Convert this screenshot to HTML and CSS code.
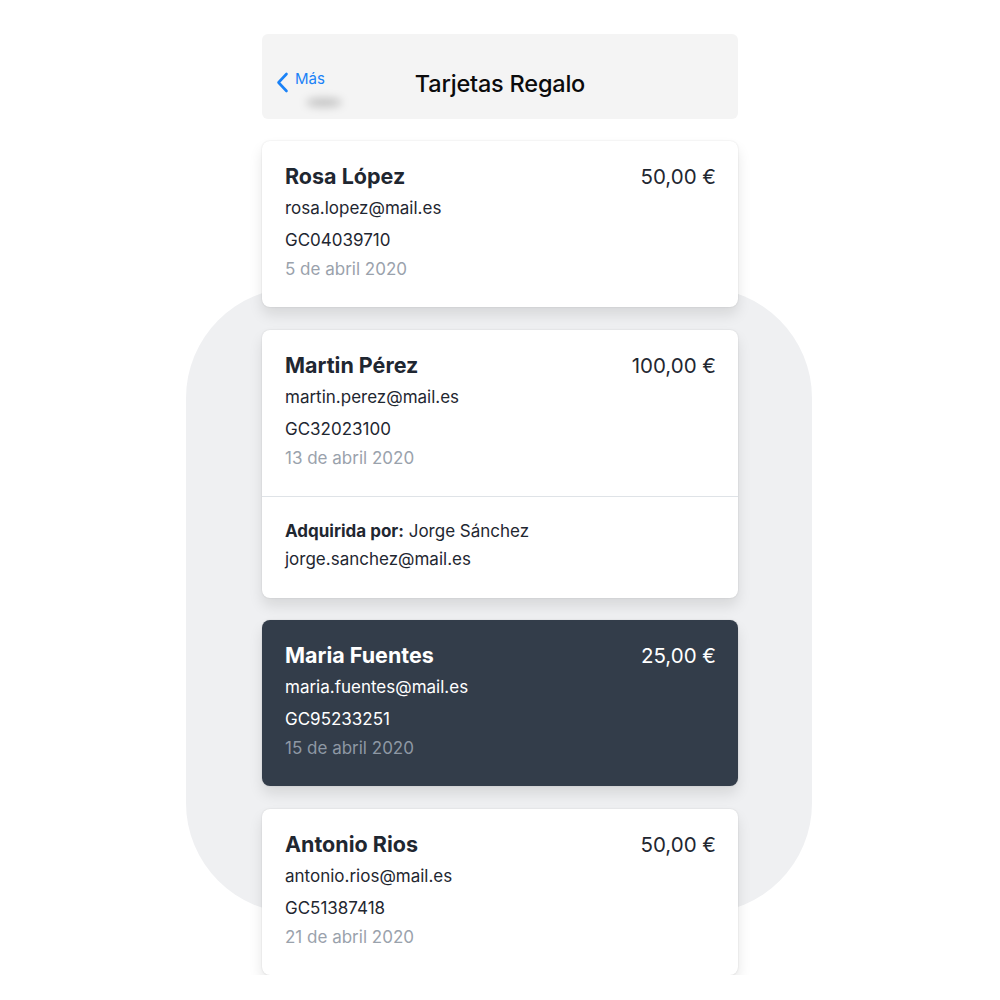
FILE: index.html
```html
<!DOCTYPE html>
<html>
<head>
	<meta charset="UTF-8">
	<meta name="viewport" content="width=device-width, initial-scale=1">
	<title>Tarjetas Regalo</title>
	<link rel="stylesheet" href="styles.css">
</head>
<body>

<div class="screen">

	<!-- cabecera -->
	<div class="nav-bar">
		<a class="back" href="#">
			<svg width="13" height="21" viewBox="0 0 13 21"><path d="M10.5 2 L2.5 10.5 L10.5 19" fill="none" stroke="#1a82f7" stroke-width="2.6" stroke-linecap="round" stroke-linejoin="round"/></svg>
			<span class="back-text">Más</span>
		</a>
		<div class="nav-title">Tarjetas Regalo</div>
	</div>

	<!-- lista de tarjetas -->
	<div class="card-list">

		<div class="card">
			<div class="card-main">
				<div class="card-top">
					<div class="name">Rosa López</div>
					<div class="price">50,00 €</div>
				</div>
				<div class="email">rosa.lopez@mail.es</div>
				<div class="code">GC04039710</div>
				<div class="date">5 de abril 2020</div>
			</div>
		</div>

		<div class="card">
			<div class="card-main">
				<div class="card-top">
					<div class="name">Martin Pérez</div>
					<div class="price">100,00 €</div>
				</div>
				<div class="email">martin.perez@mail.es</div>
				<div class="code">GC32023100</div>
				<div class="date">13 de abril 2020</div>
			</div>
			<div class="card-foot">
				<div class="buyer"><b>Adquirida por:</b> Jorge Sánchez</div>
				<div class="buyer-mail">jorge.sanchez@mail.es</div>
			</div>
		</div>

		<div class="card card-dark">
			<div class="card-main">
				<div class="card-top">
					<div class="name">Maria Fuentes</div>
					<div class="price">25,00 €</div>
				</div>
				<div class="email">maria.fuentes@mail.es</div>
				<div class="code">GC95233251</div>
				<div class="date">15 de abril 2020</div>
			</div>
		</div>

		<div class="card">
			<div class="card-main">
				<div class="card-top">
					<div class="name">Antonio Rios</div>
					<div class="price">50,00 €</div>
				</div>
				<div class="email">antonio.rios@mail.es</div>
				<div class="code">GC51387418</div>
				<div class="date">21 de abril 2020</div>
			</div>
		</div>

	</div>
</div>

</body>
</html>
```

FILE: styles.css
```css
html, body {
	margin: 0;
	background: #ffffff;
}

body {
	font-family: Inter, "Liberation Sans", sans-serif;
	color: #1f2731;
}

.screen {
	position: relative;
	width: 476px;
	margin: 0 auto;
	padding-top: 34px;
}

/* fondo gris redondeado detrás de las tarjetas */
.screen::before {
	content: "";
	position: absolute;
	left: -76px;
	top: 288px;
	width: 626px;
	height: 625px;
	border-radius: 110px;
	background: #eff0f2;
	z-index: 0;
}

/* cabecera */
.nav-bar {
	position: relative;
	z-index: 1;
	height: 85px;
	background: #f4f4f4;
	border-radius: 6px;
	display: flex;
	align-items: center;
	justify-content: center;
}

.back {
	position: absolute;
	left: 14px;
	top: 37px;
	display: flex;
	align-items: flex-start;
	gap: 6px;
	text-decoration: none;
}

.back svg {
	margin-top: 1px;
}

.back-text {
	font-size: 15px;
	line-height: 18px;
	color: #1a82f7;
	margin-top: -1px;
}

/* sombra difuminada bajo "Más" */
.back::after {
	content: "";
	position: absolute;
	left: 30px;
	top: 27px;
	width: 36px;
	height: 9px;
	border-radius: 50%;
	background: rgba(0, 0, 0, 0.2);
	filter: blur(4px);
}

.nav-title {
	font-size: 23.5px;
	font-weight: 500;
	color: #0b0b0c;
	letter-spacing: -0.2px;
	margin-top: 14px;
	margin-left: 0;
}

/* tarjetas */
.card-list {
	position: relative;
	z-index: 1;
	display: flex;
	flex-direction: column;
	gap: 22.5px;
	margin-top: 22px;
}

.card {
	background: #ffffff;
	border-radius: 8px;
	box-shadow: 0 0 2px rgba(0, 0, 0, 0.12), 0 8px 14px rgba(0, 0, 0, 0.10);
}

.card-main {
	padding: 22px 22px 26px 23px;
}

.card-top {
	display: flex;
	justify-content: space-between;
	align-items: center;
	height: 26px;
}

.name {
	font-size: 21.5px;
	line-height: 26px;
	font-weight: 700;
	color: #1f2731;
}

.price {
	font-size: 20.5px;
	line-height: 26px;
	color: #1f2731;
	position: relative;
	top: 1px;
}

.email,
.code,
.date,
.buyer,
.buyer-mail {
	font-size: 17px;
	line-height: 24px;
}

.email {
	margin-top: 7px;
}

.code {
	margin-top: 8px;
}

.date {
	margin-top: 5px;
	color: #9aa2ac;
}

.card-foot {
	border-top: 1px solid #dfe3e7;
	padding: 22px 23px 27px 23px;
}

.buyer b {
	font-weight: 700;
}

.buyer-mail {
	margin-top: 4px;
}

.card-dark {
	background: #333d4a;
}

.card-dark .name,
.card-dark .price,
.card-dark .email,
.card-dark .code {
	color: #ffffff;
}

.card-dark .date {
	color: #8e98a4;
}
```
